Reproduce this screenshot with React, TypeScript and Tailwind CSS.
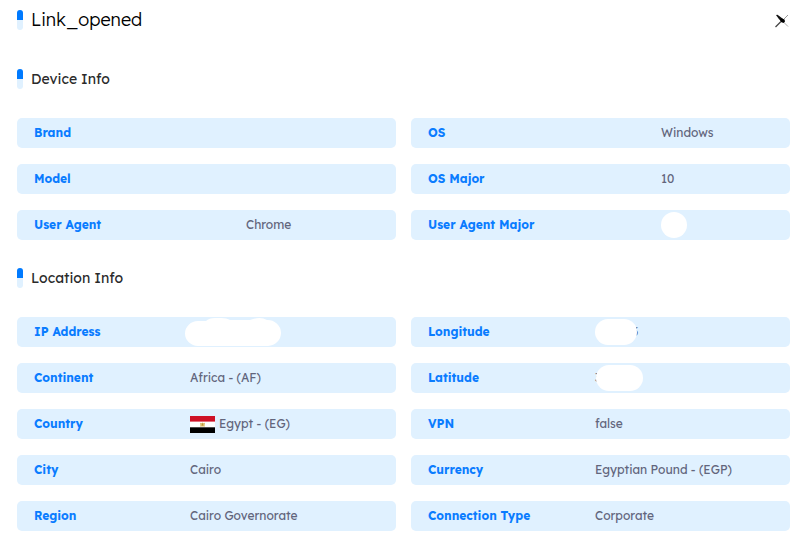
import type { ReactNode } from 'react';

type Entry = { label: string; value?: ReactNode };

function Heading({ children, large = false }: { children: ReactNode; large?: boolean }) {
  const Tag = large ? 'h1' : 'h2';
  return (
    <div className="flex h-5 items-center gap-2">
      <span className="flex h-5 w-1.5 flex-col overflow-hidden rounded-full bg-[#e0f1ff]">
        <span className="h-2.5 bg-[#007aff]" />
      </span>
      <Tag className={large ? 'text-[18px] leading-5 font-light' : 'text-[14px] leading-5 font-normal text-[#2a2a2a]'}>
        {children}
      </Tag>
    </div>
  );
}

function Column({ entries, labelWidth }: { entries: Entry[]; labelWidth: string }) {
  return (
    <dl className="flex min-w-0 flex-1 flex-col gap-4">
      {entries.map((entry) => (
        <div
          key={entry.label}
          className="flex h-[30px] items-center rounded-[5px] bg-[#e0f1ff] pl-[17px] text-[12px] leading-5"
        >
          <dt className={`${labelWidth} shrink-0 font-bold text-[#0a7cff]`}>{entry.label}</dt>
          <dd className="flex min-w-0 items-center whitespace-nowrap text-[#62657c]">{entry.value}</dd>
        </div>
      ))}
    </dl>
  );
}

function EgyptFlag() {
  return (
    <svg width="25" height="17" viewBox="0 0 25 17" role="img" aria-label="Egypt">
      <path d="M0 0h25v17H0z" fill="#fff" />
      <path d="M0 0h25v5.6H0z" fill="#ce1126" />
      <path d="M0 11.3h25V17H0z" fill="#000" />
      <path d="M10 6.8l1.5.5 1-.8 1 .8 1.5-.5-.4 2.6.5 1h-5.200l.5-1z" fill="#d9bd6a" />
      <path d="M12 7.500h1v2h-1z" fill="#b8923a" />
    </svg>
  );
}

const deviceLeft: Entry[] = [
  { label: 'Brand' },
  { label: 'Model' },
  { label: 'User Agent', value: 'Chrome' },
];

const deviceRight: Entry[] = [
  { label: 'OS', value: 'Windows' },
  { label: 'OS Major', value: '10' },
  { label: 'User Agent Major', value: <span className="size-[26px] rounded-full bg-white" /> },
];

const locationLeft: Entry[] = [
  {
    label: 'IP Address',
    value: (
      <svg className="-ml-1.5" width="99" height="30" viewBox="0 0 99 30" aria-hidden="true">
        <path
          d="M14 4h8Q25 1 31 1h6q6 0 9 2h20Q76-1 83 3A13.500 13 0 0 1 84 29H14A13 12.500 0 0 1 14 4z"
          fill="#fff"
        />
      </svg>
    ),
  },
  { label: 'Continent', value: 'Africa - (AF)' },
  {
    label: 'Country',
    value: (
      <span className="flex items-center gap-1">
        <EgyptFlag />
        Egypt - (EG)
      </span>
    ),
  },
  { label: 'City', value: 'Cairo' },
  { label: 'Region', value: 'Cairo Governorate' },
];

const locationRight: Entry[] = [
  {
    label: 'Longitude',
    value: (
      <span className="relative flex h-[26px] w-[43px] items-center justify-end">
        3
        <span className="absolute inset-y-0 left-0 w-[42px] rounded-full bg-white" />
      </span>
    ),
  },
  {
    label: 'Latitude',
    value: (
      <span className="relative flex h-[26px] w-12 items-center">
        3
        <span className="absolute inset-y-0 right-0 w-[47px] rounded-full bg-white" />
      </span>
    ),
  },
  { label: 'VPN', value: 'false' },
  { label: 'Currency', value: 'Egyptian Pound - (EGP)' },
  { label: 'Connection Type', value: 'Corporate' },
];

export default function App() {
  return (
    <main className="min-h-screen bg-white pt-2.5 pr-[18px] pb-7 pl-[17px] font-['Lexend','Inter',sans-serif] text-black">
      <header className="flex items-center justify-between">
        <Heading large>Link_opened</Heading>
        <button type="button" aria-label="Close" className="flex size-4 items-center justify-center">
          <svg width="16" height="16" viewBox="0 0 16 16" fill="none" aria-hidden="true">
            <path d="M2 3l1.500-.2L8.500 6.500l1.500 3-2.500.3Q4.500 7 2 3z" fill="#111" />
            <path d="M8 8.500l6 6" stroke="#aaa" />
            <path d="M9 8L14 3" stroke="#999" />
            <path d="M7 9.500L1.500 15" stroke="#444" strokeWidth="1.200" />
            <path d="M6 7.500l2-1 2.500 1 .5 2-1.500 1.500-2.500-1z" fill="#000" />
          </svg>
        </button>
      </header>
      <section className="mt-[39px]">
        <Heading>Device Info</Heading>
        <div className="mt-[29px] flex gap-[15px]">
          <Column entries={deviceLeft} labelWidth="w-[212px]" />
          <Column entries={deviceRight} labelWidth="w-[233px]" />
        </div>
      </section>
      <section className="mt-7">
        <Heading>Location Info</Heading>
        <div className="mt-[29px] flex gap-[15px]">
          <Column entries={locationLeft} labelWidth="w-[156px]" />
          <Column entries={locationRight} labelWidth="w-[167px]" />
        </div>
      </section>
    </main>
  );
}
